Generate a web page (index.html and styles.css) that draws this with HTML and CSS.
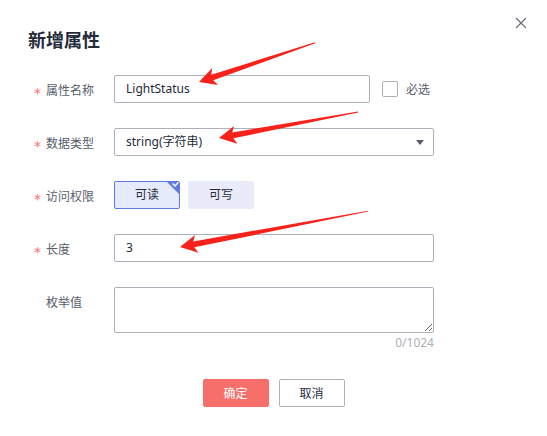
FILE: index.html
```html
<!DOCTYPE html>
<html lang="zh-CN">
<head>
<meta charset="utf-8">
<title>新增属性</title>
<link rel="stylesheet" href="styles.css">
</head>
<body>
<div class="dialog">
  <button class="close" aria-label="关闭">
    <svg width="12" height="12" viewBox="0 0 12 12"><path d="M1 1L11 11M11 1L1 11" stroke="#6b6f78" stroke-width="1.2" fill="none"/></svg>
  </button>
  <h2 class="title">新增属性</h2>
  <div class="form">
    <div class="row">
      <div class="label"><span class="star">*</span>属性名称</div>
      <div class="control inline">
        <div class="input short">LightStatus</div>
        <span class="checkbox"></span>
        <span class="check-text">必选</span>
      </div>
    </div>
    <div class="row">
      <div class="label"><span class="star">*</span>数据类型</div>
      <div class="control">
        <div class="input select">string(字符串)<span class="caret"></span></div>
      </div>
    </div>
    <div class="row">
      <div class="label"><span class="star">*</span>访问权限</div>
      <div class="control inline toggles">
        <div class="toggle active">可读
          <svg class="corner" width="14" height="14" viewBox="0 0 14 14"><path d="M0 0H14V14Z" fill="#5e7ce0"/><path d="M6.5 2.5L9 5L12.5 1" stroke="#fff" stroke-width="1.3" fill="none"/></svg>
        </div>
        <div class="toggle">可写</div>
      </div>
    </div>
    <div class="row">
      <div class="label"><span class="star">*</span>长度</div>
      <div class="control">
        <div class="input">3</div>
      </div>
    </div>
    <div class="row">
      <div class="label"><span class="star"></span>枚举值</div>
      <div class="control">
        <textarea class="textarea"></textarea>
        <div class="counter">0/1024</div>
      </div>
    </div>
  </div>
  <div class="actions">
    <button class="btn primary">确定</button>
    <button class="btn">取消</button>
  </div>
  <svg class="arrows" width="547" height="436" viewBox="0 0 547 436">
    <g fill="#f7221a">
      <polygon transform="translate(199 82) rotate(-18.7)" points="0,0 17,-9 14,-3 122.5,-0.5 122.5,0.5 14,3 17,9"/>
      <polygon transform="translate(219 138) rotate(-10.6)" points="0,0 17,-9 14,-3 141.5,-0.5 141.5,0.5 14,3 17,9"/>
      <polygon transform="translate(180 247) rotate(-10.8)" points="0,0 17,-9 14,-3 191.5,-0.5 191.5,0.5 14,3 17,9"/>
    </g>
  </svg>
</div>
</body>
</html>
```

FILE: styles.css
```css
* { box-sizing: border-box; }
html, body { margin: 0; padding: 0; background: #fff; }
body {
  font-family: "Noto Sans", "Noto Sans CJK SC", sans-serif;
  font-size: 12px;
  color: #252b3a;
}
.dialog {
  position: relative;
  width: 547px;
  height: 436px;
  padding-top: 28px;
}
.close {
  position: absolute;
  top: 17px;
  left: 515px;
  width: 12px;
  height: 12px;
  padding: 0;
  border: 0;
  background: none;
  display: block;
}
.close svg { display: block; }
.title {
  margin: 0 0 0 28px;
  font-size: 18px;
  line-height: 24px;
  font-weight: 600;
  color: #252b3a;
}
.form {
  margin-top: 23px;
  padding-left: 34px;
  display: flex;
  flex-direction: column;
  gap: 25px;
}
.row { display: flex; align-items: flex-start; }
.label {
  width: 80px;
  height: 28px;
  padding-top: 6px;
  line-height: 20px;
  color: #575d6c;
  font-size: 12px;
  display: flex;
  align-items: flex-start;
}
.star {
  width: 12px;
  height: 14px;
  margin-top: 4px;
  color: #f66f6a;
  font-family: "DejaVu Sans", sans-serif;
  font-size: 14px;
  line-height: 16px;
  overflow: visible;
}
.control { width: 320px; }
.inline { display: flex; align-items: center; }
.input {
  height: 28px;
  border: 1px solid #adb0b8;
  border-radius: 2px;
  padding: 0 11px;
  line-height: 26px;
  font-size: 12px;
  color: #252b3a;
  position: relative;
}
.input.short { width: 256px; }
.checkbox {
  width: 16px;
  height: 16px;
  border: 1px solid #adb0b8;
  border-radius: 2px;
  margin-left: 12px;
}
.check-text {
  margin-left: 8px;
  color: #575d6c;
}
.select { display: flex; justify-content: space-between; align-items: center; }
.caret {
  width: 0;
  height: 0;
  border-left: 4px solid transparent;
  border-right: 4px solid transparent;
  border-top: 5px solid #575d6c;
  margin-right: -2px;
}
.toggles { gap: 8px; }
.toggle {
  position: relative;
  width: 66px;
  height: 28px;
  line-height: 26px;
  text-align: center;
  background: #e9ecf8;
  border: 1px solid #e9ecf8;
  border-radius: 2px;
  color: #252b3a;
  overflow: hidden;
}
.toggle.active {
  border-color: #5e7ce0;
  background: #e6ebfb;
}
.corner { position: absolute; top: -1px; right: -1px; }
.textarea {
  display: block;
  width: 320px;
  height: 46px;
  border: 1px solid #adb0b8;
  border-radius: 2px;
  margin: 0;
  resize: vertical;
  font-family: inherit;
}
.counter {
  text-align: right;
  line-height: 18px;
  color: #adb0b8;
  font-size: 12px;
  margin-top: 1px;
}
.actions {
  margin-top: 27px;
  display: flex;
  justify-content: center;
  gap: 10px;
}
.btn {
  width: 66px;
  height: 28px;
  border: 1px solid #adb0b8;
  border-radius: 2px;
  background: #fff;
  color: #252b3a;
  font-family: inherit;
  font-size: 12px;
  padding: 0;
}
.btn.primary {
  background: #f66f6a;
  border-color: #f66f6a;
  color: #fff;
}
.arrows {
  position: absolute;
  top: 0;
  left: 0;
  pointer-events: none;
}
```
